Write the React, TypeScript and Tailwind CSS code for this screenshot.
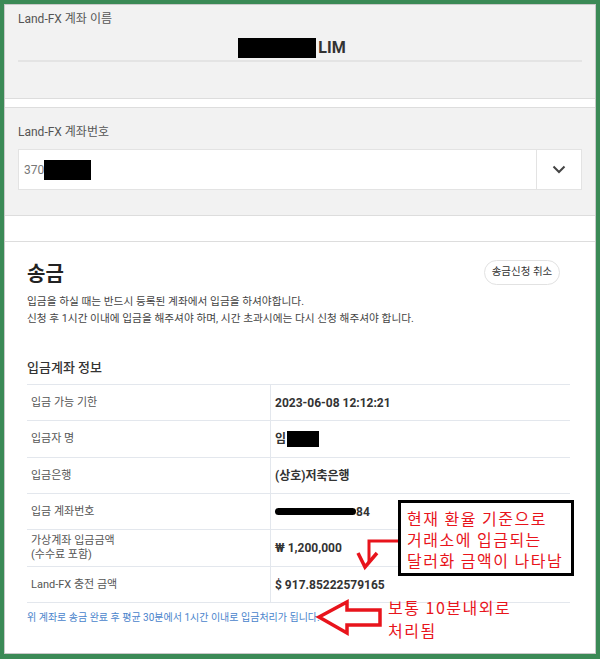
const rows: { label: string[]; value: React.ReactNode; h: string }[] = [
  { label: ["입금 가능 기한"], value: "2023-06-08 12:12:21", h: "h-[36px]" },
  {
    label: ["입금자 명"],
    value: (
      <span className="flex items-center">
        임<span className="ml-px inline-block h-[16px] w-[32px] bg-black" />
      </span>
    ),
    h: "h-[37px]",
  },
  { label: ["입금은행"], value: "(상호)저축은행", h: "h-[36px]" },
  {
    label: ["입금 계좌번호"],
    value: (
      <span className="flex items-center">
        <span className="inline-block h-[7px] w-[81px] rounded-full bg-black" />
        84
      </span>
    ),
    h: "h-[36px]",
  },
  { label: ["가상계좌 입금금액", "(수수료 포함)"], value: "₩ 1,200,000", h: "h-[37px]" },
  { label: ["Land-FX 충전 금액"], value: "$ 917.85222579165", h: "h-[36px]" },
];

export default function App() {
  return (
    <div className="relative h-[659px] w-[600px] bg-[#3b8a56] pb-[5px] pl-[4px] pr-[4px] pt-[4px] font-['Roboto','Noto_Sans_CJK_KR',sans-serif]">
      <div className="flex h-full flex-col border border-[#c9c9c9] bg-white">
        {/* 계좌 이름 */}
        <section className="h-[94px] border-b border-[#dddddd] bg-[#f2f2f2] px-[13px] pt-[6px]">
          <div className="text-[12px] leading-[16px] text-[#555]">Land-FX 계좌 이름</div>
          <div className="mt-[9px] flex h-[26px] items-start justify-center border-b-2 border-[#e4e4e4] pr-[16px] pt-[2px]">
            <span className="inline-block h-[20px] w-[78px] bg-black" />
            <span className="ml-[2px] text-[16px] font-bold leading-[20px] text-[#333]">LIM</span>
          </div>
        </section>

        {/* 계좌번호 */}
        <section className="mt-[8px] h-[109px] border-y border-[#dddddd] bg-[#f2f2f2] px-[13px] pt-[16px]">
          <div className="text-[12px] leading-[16px] text-[#555]">Land-FX 계좌번호</div>
          <div className="mt-[9px] flex h-[41px] border border-[#e3e3e3] bg-white">
            <div className="flex flex-1 items-center pl-[5px] text-[12px] text-[#777]">
              370
              <span className="inline-block h-[20px] w-[47px] bg-black" />
            </div>
            <div className="flex w-[45px] items-center justify-center border-l border-[#e3e3e3]">
              <svg width="14" height="9" viewBox="0 0 14 9">
                <polyline points="1.5,1.5 7,7 12.5,1.5" fill="none" stroke="#444" strokeWidth="2" />
              </svg>
            </div>
          </div>
        </section>

        {/* 송금 */}
        <section className="mt-[25px] flex-1 border-t border-[#dddddd] pl-[22px] pr-[25px]">
          <div className="mt-[18px] flex h-[28px] items-center justify-between">
            <h1 className="text-[20px] font-bold leading-[28px] text-[#222]">송금</h1>
            <button className="-mt-[4px] mr-[10px] h-[25px] w-[76px] rounded-full border border-[#e2e2e2] text-[10.5px] text-[#333]">
              송금신청 취소
            </button>
          </div>
          <p className="mt-[5px] text-[10.7px] leading-[17px] text-[#444]">
            입금을 하실 때는 반드시 등록된 계좌에서 입금을 하셔야합니다.
            <br />
            신청 후 1시간 이내에 입금을 해주셔야 하며, 시간 초과시에는 다시 신청 해주셔야 합니다.
          </p>
          <h2 className="mt-[32px] text-[13px] font-medium leading-[18px] text-[#333]">입금계좌 정보</h2>
          <div className="mt-[7px] border-t border-[#e3e7ed]">
            {rows.map((r, i) => (
              <div key={i} className={`flex border-b border-[#e3e7ed] ${r.h}`}>
                <div className="flex w-[244px] flex-col justify-center border-r border-[#e3e7ed] pl-[4px] text-[11px] leading-[14px] text-[#555]">
                  {r.label.map((l) => (
                    <span key={l}>{l}</span>
                  ))}
                </div>
                <div className="flex items-center pl-[4px] text-[12px] font-bold text-[#333]">{r.value}</div>
              </div>
            ))}
          </div>
          <p className="mt-[7px] text-[10px] leading-[16px] text-[#4a84cc]">
            위 계좌로 송금 완료 후 평균 30분에서 1시간 이내로 입금처리가 됩니다.
          </p>
        </section>
      </div>

      {/* annotations */}
      <svg className="pointer-events-none absolute left-0 top-0" width="600" height="659" viewBox="0 0 600 659">
        <path d="M398,541 H369 V562" fill="none" stroke="#e8141c" strokeWidth="3" />
        <path d="M358,553 L365,567 L377,553" fill="none" stroke="#e8141c" strokeWidth="3.5" />
        <polygon
          points="319,617 347,602 347,610 380,610 380,625 347,625 347,633"
          fill="none"
          stroke="#e8141c"
          strokeWidth="3.5"
          strokeLinejoin="miter"
        />
      </svg>
      <div className="absolute left-[398px] top-[500px] h-[76px] w-[176px] border-[3px] border-black bg-white pl-[6px] pt-[5px] font-['Noto_Sans_CJK_KR',sans-serif] text-[16px] leading-[21px] tracking-[1.5px] text-[#e8141c]">
        <div>현재 환율 기준으로</div>
        <div>거래소에 입금되는</div>
        <div>달러화 금액이 나타남</div>
      </div>
      <div className="absolute left-[388px] top-[596px] font-['Noto_Sans_CJK_KR',sans-serif] text-[16px] leading-[23px] tracking-[1.5px] text-[#e8141c]">
        <div>보통 10분내외로</div>
        <div>처리됨</div>
      </div>
    </div>
  );
}
